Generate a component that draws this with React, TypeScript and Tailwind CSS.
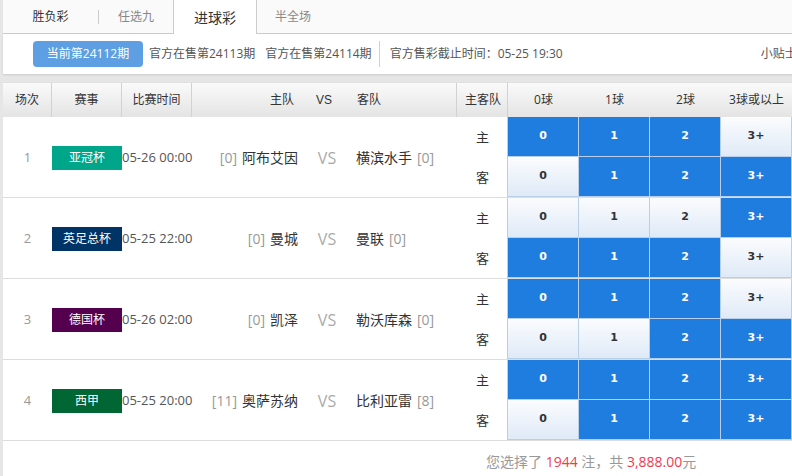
import React from "react";

type Match = {
  no: number;
  league: string;
  color: string;
  time: string;
  homeRank: string;
  home: string;
  away: string;
  awayRank: string;
  sel: number[][];
};

const matches: Match[] = [
  {
    no: 1,
    league: "亚冠杯",
    color: "bg-[#00a68a]",
    time: "05-26 00:00",
    homeRank: "[0]",
    home: "阿布艾因",
    away: "横滨水手",
    awayRank: "[0]",
    sel: [
      [1, 1, 1, 0],
      [0, 1, 1, 1],
    ],
  },
  {
    no: 2,
    league: "英足总杯",
    color: "bg-[#003466]",
    time: "05-25 22:00",
    homeRank: "[0]",
    home: "曼城",
    away: "曼联",
    awayRank: "[0]",
    sel: [
      [0, 0, 0, 1],
      [1, 1, 1, 0],
    ],
  },
  {
    no: 3,
    league: "德国杯",
    color: "bg-[#55004f]",
    time: "05-26 02:00",
    homeRank: "[0]",
    home: "凯泽",
    away: "勒沃库森",
    awayRank: "[0]",
    sel: [
      [1, 1, 1, 0],
      [0, 0, 1, 1],
    ],
  },
  {
    no: 4,
    league: "西甲",
    color: "bg-[#006633]",
    time: "05-25 20:00",
    homeRank: "[11]",
    home: "奥萨苏纳",
    away: "比利亚雷",
    awayRank: "[8]",
    sel: [
      [1, 1, 1, 1],
      [0, 1, 1, 1],
    ],
  },
];

const goals = ["0", "1", "2", "3+"];

function GoalCell({ label, on }: { label: string; on: boolean }) {
  return (
    <div
      className={`w-[71px] h-[40px] shrink-0 flex items-center justify-center border-r border-b border-[#b9cfe9] font-['DejaVu_Sans',sans-serif] font-bold text-[11px] ${
        on
          ? "bg-[#1f7ddf] text-white"
          : "bg-gradient-to-b from-[#fbfcfe] to-[#dfeaf7] text-[#333]"
      }`}
    >
      {label}
    </div>
  );
}

function MatchRow({ m }: { m: Match }) {
  return (
    <div className="flex h-[81px] border-b border-[#dddddd] bg-white">
      <div className="w-[49px] shrink-0 flex items-center justify-center pt-[1px] text-[13px] text-[#999]">
        {m.no}
      </div>
      <div className="w-[70px] shrink-0 flex items-center pt-[1px]">
        <div
          className={`w-[70px] h-[24px] flex items-center justify-center text-[12px] text-white ${m.color}`}
        >
          {m.league}
        </div>
      </div>
      <div className="w-[73px] shrink-0 flex items-center pt-[1px] text-[13px] text-[#555] whitespace-nowrap">
        {m.time}
      </div>
      <div className="w-[103px] shrink-0 flex items-center justify-end pt-[1px] text-[14px] text-[#333] whitespace-nowrap">
        <span className="text-[#999] mr-[5px]">{m.homeRank}</span>
        {m.home}
      </div>
      <div className="w-[58px] shrink-0 flex items-center justify-center pt-[1px] text-[16px] text-[#aaa]">
        VS
      </div>
      <div className="w-[99px] shrink-0 flex items-center pt-[1px] text-[14px] text-[#333] whitespace-nowrap">
        {m.away}
        <span className="text-[#999] ml-[5px]">{m.awayRank}</span>
      </div>
      <div className="w-[53px] shrink-0 flex flex-col pt-[1px] text-[13px] text-[#333] border-r border-[#b9cfe9]">
        <div className="h-[40px] flex items-center justify-center pl-[3px]">主</div>
        <div className="h-[40px] flex items-center justify-center pl-[3px]">客</div>
      </div>
      <div className="flex flex-col">
        {m.sel.map((row, r) => (
          <div key={r} className="flex">
            {row.map((v, i) => (
              <GoalCell key={i} label={goals[i]} on={v === 1} />
            ))}
          </div>
        ))}
      </div>
    </div>
  );
}

export default function App() {
  const headCell =
    "shrink-0 h-full flex items-center justify-center border-r border-[#d2d2d2]";
  const goalHead =
    "shrink-0 h-full w-[71px] flex items-center justify-center";

  return (
    <div className="w-[792px] h-[476px] overflow-hidden bg-[#e6e6e6] font-['Open_Sans','Noto_Sans_CJK_SC',sans-serif]">
      <div className="ml-[3px] w-[900px]">
        {/* tabs */}
        <div className="flex h-[34px] bg-[#fafafa] border-b border-[#cccccc] text-[12px]">
          <div className="w-[95px] flex items-center justify-center text-[#333]">胜负彩</div>
          <div className="w-px h-[14px] bg-[#cccccc] self-center"></div>
          <div className="w-[74px] flex items-center justify-center text-[#888]">任选九</div>
          <div className="w-[84px] h-[34px] flex items-center justify-center text-[#333] bg-white border-x border-[#cccccc] text-[14px]">
            进球彩
          </div>
          <div className="w-[72px] flex items-center justify-center text-[#888]">半全场</div>
        </div>

        {/* period bar */}
        <div className="flex items-center h-[40px] bg-white text-[12px] text-[#555] shadow-[0_1px_2px_rgba(0,0,0,0.12)]">
          <div className="ml-[30px] w-[110px] h-[26px] rounded-[4px] bg-[#5d9fe2] text-white flex items-center justify-center">
            当前第24112期
          </div>
          <span className="ml-[6px]">官方在售第24113期</span>
          <span className="ml-[10px]">官方在售第24114期</span>
          <div className="w-px h-[26px] bg-[#d0d0d0] ml-[7px]"></div>
          <span className="ml-[10px]">官方售彩截止时间：05-25 19:30</span>
          <span className="ml-[198px]">小贴士</span>
        </div>

        {/* table header */}
        <div className="mt-[8px] flex h-[35px] bg-gradient-to-b from-[#fafafa] to-[#e4e4e4] border-t border-[#e0e0e0] text-[12px] text-[#333]">
          <div className={`${headCell} w-[49px]`}>场次</div>
          <div className={`${headCell} w-[70px]`}>赛事</div>
          <div className={`${headCell} w-[70px]`}>比赛时间</div>
          <div className="shrink-0 h-full w-[265px] flex items-center pl-[78px] border-r border-[#d2d2d2]">
            <span>主队</span>
            <span className="ml-[22px] font-['Liberation_Sans',sans-serif] text-[12px]">VS</span>
            <span className="ml-[25px]">客队</span>
          </div>
          <div className={`${headCell} w-[51px] pl-[2px]`}>主客队</div>
          <div className={goalHead}>0球</div>
          <div className={goalHead}>1球</div>
          <div className={goalHead}>2球</div>
          <div className={goalHead}>3球或以上</div>
        </div>

        {/* rows */}
        {matches.map((m) => (
          <MatchRow key={m.no} m={m} />
        ))}

        {/* footer */}
        <div className="h-[40px] bg-white flex items-center text-[14px] text-[#999]">
          <div className="ml-[483px]">
            您选择了 <span className="text-[#f03a4e]">1944</span> 注，共{" "}
            <span className="text-[#f03a4e]">3,888.00</span>元
          </div>
        </div>
      </div>
    </div>
  );
}
